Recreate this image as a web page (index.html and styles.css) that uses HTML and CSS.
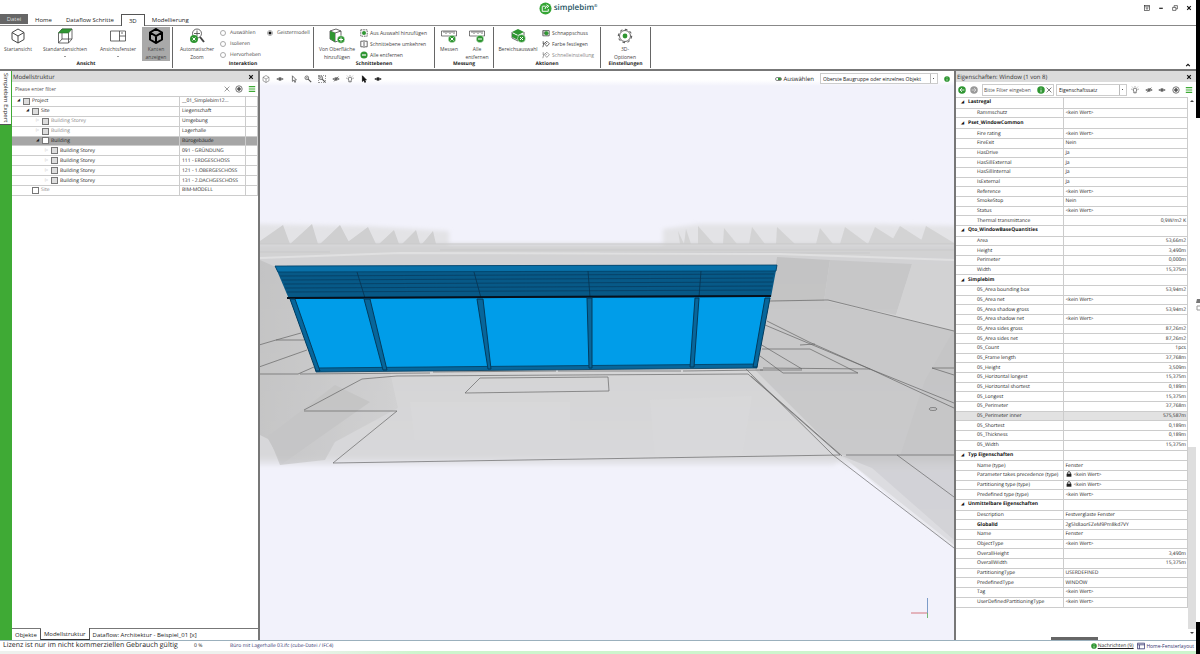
FILE: index.html
```html
<!DOCTYPE html>
<html lang="de">
<head>
<meta charset="utf-8">
<title>simplebim</title>
<link rel="stylesheet" href="styles.css">
</head>
<body>
<svg class="defs" aria-hidden="true">
  <symbol id="cube" viewBox="0 0 16 16"><path d="M8 1 14 4.500V11.500L8 15 2 11.500V4.500ZM2 4.500 8 8 14 4.500M8 8V15"/></symbol>
  <symbol id="eye" viewBox="0 0 10 10"><path d="M1 5Q5 1.500 9 5 5 8.500 1 5Z"/><circle cx="5" cy="5" r="1.200" fill="currentColor"/></symbol>
  <symbol id="eyeoff" viewBox="0 0 10 10"><path d="M1 5Q5 1.500 9 5 5 8.500 1 5ZM2.500 8 8 2"/><circle cx="5" cy="5" r="1" fill="currentColor"/></symbol>
  <symbol id="bulb" viewBox="0 0 10 10"><path d="M3.500 6.500Q2 5 3 3.500 5 1.500 7 3.500 8 5 6.500 6.500V8.500H3.500ZM5 .2V1M.5 4H1.500M8.500 4H9.500M1.500 1 2.200 1.700M8.500 1 7.800 1.700"/></symbol>
  <symbol id="target" viewBox="0 0 10 10"><circle cx="5" cy="5" r="4"/><circle cx="5" cy="5" r="1.800" fill="currentColor"/></symbol>
  <symbol id="menu" viewBox="0 0 10 10"><path d="M1 2H9M1 5H9M1 8H9" stroke="#3faa35" stroke-width="1.500"/></symbol>
  <symbol id="x" viewBox="0 0 10 10"><path d="M1 1 9 9M9 1 1 9"/></symbol>
  <symbol id="xs" viewBox="0 0 10 10"><path d="M2 2 8 8M8 2 2 8"/></symbol>
  <symbol id="arrow" viewBox="0 0 10 10"><path d="M3 1V8L4.700 6.500 6 9.300 7 8.800 5.800 6.200H8Z"/></symbol>
  <symbol id="lens" viewBox="0 0 10 10"><circle cx="3.500" cy="3.500" r="2.300"/><path d="M5.200 5.200 9 9" stroke-width="1.500"/><path d="M2.500 3.500H4.500M3.500 2.500V4.500" stroke-width=".6"/></symbol>
  <symbol id="info" viewBox="0 0 10 10"><circle cx="5" cy="5" r="4.700" fill="#2f9632" stroke="none"/><path d="M5 4.500V8M5 2.200V3.200" stroke="#fff"/></symbol>
  <symbol id="lock" viewBox="0 0 10 10"><rect x="1" y="4.500" width="8" height="5" fill="#222" stroke="none"/><path d="M2.700 5V3.500Q2.700 1 5 1 7.300 1 7.300 3.500V5" stroke="#222" stroke-width="1.300"/></symbol>
  <symbol id="brush" viewBox="0 0 10 10"><path d="M1 9 2.500 3.500M1.500 1.500V5M3 4.500 6 1.500 9.200 4.700 6 8ZM4 3 6 5"/></symbol>
</svg>
<div class="app">
  <header class="titlebar">
    <div class="logo">
      <svg class="logo-mark" viewBox="0 0 14 14"><circle cx="7" cy="7" r="6.500" fill="#35a535" stroke="none"/><path d="M7 4.500H4Q3.500 4.500 3.500 5V10H10V7.500M6.500 7.500Q6.500 5 9 4.500M8 3 10.500 4.500 8.500 6.500" fill="none" stroke="#fff"/></svg>
      <span>simplebim<sup>®</sup></span>
    </div>
    <div class="window-buttons">
      <button aria-label="Menüband"><svg class="i6" viewBox="0 0 10 10"><rect x="1" y="1" width="8" height="8"/><path d="M1 3H9M5 8V4.500M3.500 6 5 4.500 6.500 6"/></svg></button>
      <button aria-label="Minimieren"><svg class="i6" viewBox="0 0 10 10"><path d="M2 5.500H8" stroke-width="2"/></svg></button>
      <button aria-label="Wiederherstellen"><svg class="i6" viewBox="0 0 10 10"><path d="M1 4H6.500V9H1ZM3.500 4V1H9V6.500H6.500"/></svg></button>
      <button aria-label="Schließen"><svg class="i6 bold"><use href="#xs"/></svg></button>
    </div>
  </header>
  <nav class="tabs">
    <button class="file">Datei</button><button>Home</button><button>Dataflow Schritte</button><button class="active">3D</button><button>Modellierung</button>
  </nav>
  <div class="ribbon">
    <section class="group g-view">
      <div class="tools">
        <button class="big w36"><svg><use href="#cube"/></svg><span>Startansicht</span></button>
        <button class="big w58"><svg viewBox="0 0 16 16"><path d="M1.500 5 5 1H15V11L11.500 15H1.500ZM11.500 5V15M5 5V11H15M5 11 1.500 15" stroke-width=".8"/><path d="M1.500 5 5 1H15L11.500 5Z" fill="#2f9632" stroke="#2a6b2c" stroke-width=".6"/></svg><span>Standardansichten</span><i class="caret"></i></button>
        <button class="big w48"><svg viewBox="0 0 16 16"><path d="M.5 3H15.500V13H.5ZM9.500 3V13M9.500 8H15.500M11 5H13" stroke-width=".8"/></svg><span>Ansichtsfenster</span><i class="caret"></i></button>
        <button class="big w28 pressed"><svg><use href="#cube"/></svg><span>Kanten<br>anzeigen</span></button>
      </div>
      <h2>Ansicht</h2>
    </section>
    <section class="group g-inter">
      <div class="tools">
        <button class="big w44"><svg viewBox="0 0 16 16"><circle cx="8" cy="5.500" r="4.500" stroke-width=".8"/><path d="M8 2.500V8.500M5 5.500H11" stroke-width=".8"/><path d="M11 9 15 14" stroke-width="2"/><circle cx="5" cy="11" r="4" fill="#2f9632" stroke="none"/><path d="M3.500 9.500 6.500 12.500M6.500 9.500 3.500 12.500" stroke="#fff"/></svg><span>Automatischer<br>Zoom</span></button>
        <div class="stack radios">
          <label><input type="radio" name="mode">Auswählen</label>
          <label><input type="radio" name="mode">Isolieren</label>
          <label><input type="radio" name="mode">Hervorheben</label>
        </div>
        <div class="stack"><label><input type="radio" name="mode" checked>Geistermodell</label></div>
      </div>
      <h2>Interaktion</h2>
    </section>
    <section class="group g-cut">
      <div class="tools">
        <button class="big w44"><svg viewBox="0 0 16 16"><path d="M1 3 7 1 12 3V12L6 14 1 11ZM1 3 6 5 12 3M6 5V14" stroke-width=".8"/><path d="M1 3 6 5V14L1 11Z" fill="#2f9632" stroke="none"/><circle cx="12" cy="11.500" r="3.800" fill="#2f9632" stroke="#fff" stroke-width=".5"/><path d="M10 11.500H14M12 9.500V13.500" stroke="#fff"/></svg><span>Von Oberfläche<br>hinzufügen</span></button>
        <div class="stack">
          <button><svg class="i8" viewBox="0 0 10 10"><rect x="1" y="1" width="8" height="8" stroke-dasharray="2 1"/><circle cx="5" cy="5" r="2.500" fill="#2f9632" stroke="none"/></svg>Aus Auswahl hinzufügen</button>
          <button><svg class="i8" viewBox="0 0 10 10"><path d="M4 1.500H1V8.500H4M6 1.500H9V8.500H6M5 0V10"/></svg>Schnittebene umkehren</button>
          <button><svg class="i8" viewBox="0 0 10 10"><circle cx="5" cy="5" r="4.500" fill="#2f9632" stroke="none"/><path d="M2.500 5H7.500" stroke="#fff" stroke-width="1.500"/></svg>Alle entfernen</button>
        </div>
      </div>
      <h2>Schnittebenen</h2>
    </section>
    <section class="group g-meas">
      <div class="tools">
        <button class="big w28"><svg viewBox="0 0 16 16"><path d="M.5 8V3H15.500V8ZM3 3V5M5 3V6M7 3V5M9 3V6M11 3V5M13 3V6" stroke-width=".7"/><circle cx="11" cy="11" r="3.800" fill="#2f9632" stroke="#fff" stroke-width=".5"/><path d="M9.500 9.500 12.500 12.500M12.500 9.500 9.500 12.500" stroke="#fff"/></svg><span>Messen</span></button>
        <button class="big w28"><svg viewBox="0 0 16 16"><path d="M.5 8V3H15.500V8ZM3 3V5M5 3V6M7 3V5M9 3V6M11 3V5M13 3V6" stroke-width=".7"/><circle cx="11" cy="11" r="3.800" fill="#2f9632" stroke="#fff" stroke-width=".5"/><path d="M9 11H13" stroke="#fff"/></svg><span>Alle<br>entfernen</span></button>
      </div>
      <h2>Messung</h2>
    </section>
    <section class="group g-act">
      <div class="tools">
        <button class="big w48"><svg viewBox="0 0 16 16"><path d="M2 4 8 1 14 4 8 7Z" fill="#2f9632" stroke="none"/><path d="M2 4V10L8 13V7M14 4V10" stroke-width=".8"/><path d="M2 5 8 8V12L2 9Z" fill="#2f9632" stroke="none"/><circle cx="11.500" cy="10.500" r="4" fill="#2f9632" stroke="#fff" stroke-width=".5"/><path d="M10 9 13 12M13 9 10 12" stroke="#fff"/></svg><span>Bereichsauswahl</span></button>
        <div class="stack">
          <button><svg class="i8" viewBox="0 0 10 10"><path d="M1 2H9V8.500H1Z"/><circle cx="5.500" cy="5.200" r="2.200" fill="#2f9632" stroke="#2f9632"/><path d="M2.500 3V7"/></svg>Schnappschuss</button>
          <button><svg class="i8"><use href="#brush"/></svg>Farbe festlegen</button>
          <button class="dim"><svg class="i8"><use href="#brush"/></svg>Schnelleinstellung</button>
        </div>
      </div>
      <h2>Aktionen</h2>
    </section>
    <section class="group g-opt">
      <div class="tools">
        <button class="big w48"><svg viewBox="0 0 16 16"><circle cx="8" cy="8" r="5.500" stroke-width=".8"/><circle cx="8" cy="8" r="6.700" stroke-dasharray="2.600 2.600"/><circle cx="8" cy="8" r="2.400" fill="#2f9632" stroke="none"/></svg><span>3D-<br>Optionen</span></button>
      </div>
      <h2>Einstellungen</h2>
    </section>
    <button class="collapse" aria-label="Menüband reduzieren"><svg class="i6" viewBox="0 0 10 10"><path d="M2 7 5 4 8 7" stroke="#111" stroke-width="2"/></svg></button>
  </div>

  <main class="workspace">
    <aside class="rail"><button>Simplebim Expert</button></aside>
    <section class="panel model">
      <header class="panel-head"><h3>Modellstruktur</h3><button aria-label="Schließen"><svg class="i6 bold"><use href="#xs"/></svg></button></header>
      <div class="filter">
        <input type="text" aria-label="Filter" placeholder="Please enter filter">
        <button aria-label="Löschen"><svg class="i6"><use href="#x"/></svg></button>
        <button aria-label="Ziel"><svg class="i8"><use href="#target"/></svg></button>
        <button aria-label="Menü"><svg class="i8"><use href="#menu"/></svg></button>
      </div>
      <div class="tree-area">
      <table class="tree">
        <colgroup><col><col class="c-name"><col class="c-end"></colgroup>
        <tbody>
        <tr><td><label class="l0 open"><input type="checkbox">Project</label></td><td>__01_Simplebim12...</td><td></td></tr>
        <tr><td><label class="l1 open"><input type="checkbox">Site</label></td><td>Liegenschaft</td><td></td></tr>
        <tr><td><label class="l2 shut dim"><input type="checkbox">Building Storey</label></td><td>Umgebung</td><td></td></tr>
        <tr><td><label class="l2 shut dim"><input type="checkbox">Building</label></td><td>Lagerhalle</td><td></td></tr>
        <tr class="sel"><td><label class="l2 open"><input type="checkbox">Building</label></td><td>Bürogebäude</td><td></td></tr>
        <tr><td><label class="l3 shut"><input type="checkbox">Building Storey</label></td><td>091 - GRÜNDUNG</td><td></td></tr>
        <tr><td><label class="l3 shut"><input type="checkbox">Building Storey</label></td><td>111 - ERDGESCHOSS</td><td></td></tr>
        <tr><td><label class="l3 shut"><input type="checkbox">Building Storey</label></td><td>121 - 1.OBERGESCHOSS</td><td></td></tr>
        <tr><td><label class="l3 shut"><input type="checkbox">Building Storey</label></td><td>131 - 2.DACHGESCHOSS</td><td></td></tr>
        <tr><td><label class="l1 dim blank"><input type="checkbox">Site</label></td><td>BIM-MODELL</td><td></td></tr>
        </tbody>
      </table>
      </div>
      <nav class="bottom-tabs"><button>Objekte</button><button class="active">Modellstruktur</button><button>Dataflow: Architektur - Beispiel_01 [x]</button></nav>
    </section>

    <section class="view">
      <div class="view-bar">
        <button aria-label="Start"><svg class="i8"><use href="#cube"/></svg></button>
        <button aria-label="Zeigen"><svg class="i8"><use href="#eye"/></svg></button>
        <button aria-label="Auswahl"><svg class="i8"><use href="#arrow"/></svg></button>
        <button aria-label="Zoom"><svg class="i8"><use href="#lens"/></svg></button>
        <button aria-label="Zoomfenster" class="framed"><svg class="i8"><use href="#lens"/></svg></button>
        <button aria-label="Ausblenden"><svg class="i8"><use href="#eyeoff"/></svg></button>
        <button aria-label="Licht"><svg class="i8"><use href="#bulb"/></svg></button>
        <button aria-label="Zeiger"><svg class="i8 solid"><use href="#arrow"/></svg></button>
        <button aria-label="Ansicht"><svg class="i8 dark"><use href="#eye"/></svg></button>
        <label class="toggle"><input type="checkbox" checked>Auswählen</label>
        <select aria-label="Auswahlebene"><option>Oberste Baugruppe oder einzelnes Objekt</option></select>
        <button aria-label="Info"><svg class="i6"><use href="#info"/></svg></button>
      </div>
      <svg class="scene" viewBox="260 86 694 554" preserveAspectRatio="none">
        <defs>
          <linearGradient id="ground" x1="0" y1="242" x2="0" y2="470" gradientUnits="userSpaceOnUse"><stop offset="0" stop-color="#d2d2d3"/><stop offset=".45" stop-color="#d4d4d5"/><stop offset=".94" stop-color="#d8d8da"/><stop offset="1" stop-color="#f2f2fb"/></linearGradient>
          <linearGradient id="side" x1="0" y1="0" x2="1" y2="0"><stop offset="0" stop-color="#b8b8b8"/><stop offset="1" stop-color="#cdcdce"/></linearGradient>
          <filter id="soft"><feGaussianBlur stdDeviation="2"/></filter>
          <filter id="soft2"><feGaussianBlur stdDeviation=".6"/></filter>
        </defs>
        <g filter="url(#soft)">
          <path d="M250 224 367 226 449 231V246H250Z" fill="#e3e3e6"/>
          <path d="M663 229 700 224 880 224 960 226V248H663Z" fill="#e3e3e6"/>
          <path d="M250 244 960 244V555L840 462 833 466H250Z" fill="url(#ground)"/>
        </g>
        <g fill="#cfcfd0" filter="url(#soft2)">
          <path d="M260 241 283 225 290 244H260ZM290 244 312 224 318 244ZM320 244 340 225 350 244ZM345 244 368 227 376 244ZM379 244 394 230 399 244ZM402 244 416 230 420 244ZM422 244 433 231 436 244Z"/>
          <path d="M678 231 684 244H680ZM686 229 691 244H684ZM698 226 714 244H698ZM724 228 737 244H723ZM752 227 765 244H749ZM777 227 795 244H776ZM820 228 833 244H816ZM845 227 868 244H840ZM875 227 902 244H868ZM900 226 928 244H890ZM926 226 954 243V244H920Z" opacity=".8"/>
        </g>
        <path d="M260 244H954M440 250H954M260 252H330M600 253H870" stroke="#c9c9ca"/>
        <path d="M260 258 400 253 780 254 954 260" fill="none" stroke="#e0e0e1" stroke-width="2"/>
        <g opacity=".55">
          <path d="M260 260 278 268 316 372 390 372 398 408 335 442 325 460 280 465 270 440 260 435Z" fill="url(#side)"/>
          <path d="M777 257 830 260 824 302 770 302Z" fill="#b8b8b8"/>
          <path d="M830 260 912 264 896 315 824 300Z" fill="#bfbfc0"/>
          <path d="M912 264H954V330L896 315Z" fill="#d2d2d3"/>
          <path d="M770 302 827 301 954 331V470L840 455 755 370Z" fill="#bfbfc0"/>
          <path d="M954 330V545L842 456H900L925 380Z" fill="#b9b9ba"/>
          <path d="M267 437 335 385 370 402 282 464Z" fill="#b8b8b8"/>
          <path d="M410 402H570V440H415ZM650 400 752 396 742 455H655Z" fill="#dadadc"/>
        </g>
        <path d="M842 456 872 468 954 540V548L905 510Z" fill="#e3e3e6" opacity=".6"/>
        <g class="edges">
          <path d="M259 345 276 340 301 333M276 340H304M259 367 307 350M259 374 298 374 314 367M300 374 430 373M433 372 556 371M558 371 681 371M683 371 763 370"/>
          <path d="M304 410 362 379 397 376 748 374 840 455 333 463 397 411H304M480 378 608 377 609 391 465 393Z"/>
          <path d="M746 369 833 455 954 548M751 376 842 456M846 455H954M897 455 954 497"/>
          <path d="M770 301 828 300 954 331M767 321 809 342 870 369 954 403M765 325 870 369 954 408M760 344 802 369M762 349H810L858 373 783 373 760 356M763 368 870 369M800 345 815 344M760 370 802 370M932 368H954M932 368 954 375"/>
          <ellipse cx="933" cy="409" rx="4" ry="1.500"/>
        </g>
        <path d="M289 297 771 295 756 367 317 371Z" fill="#009de9"/>
        <path d="M275 266 777 265 771 297 289 299Z" fill="#075987"/>
        <path d="M275 266 777 265 776 271 278 272Z" fill="#0870a8" stroke="#034066" stroke-width=".8"/>
        <path d="M280 276 774 274M282 280 773 278M284 284 773 282M285 288 772 286M287 292 771 290" stroke="#07395c" stroke-width=".7" fill="none"/>
        <path d="M357 272 365 298M474 272 481 298M588 271 590 297M701 271 699 297" stroke="#08324f" stroke-width=".8" fill="none"/>
        <path d="M287 298 771 296" stroke="#06111d" stroke-width="2"/>
        <path d="M315 368 757 364V368L316 372Z" fill="#07669b" stroke="#033b5d" stroke-width=".8"/>
        <g fill="#07669b" stroke="#033b5d"><path d="M290 299H295L320 371H316ZM364 299H370L387 370H383ZM477 299H483L491 369H488ZM587 298H592V368H589ZM695 298H699L694 367H690ZM765 298H770L757 367H753Z"/></g>
        <path d="M911 613H927" stroke="#d4767e"/><path d="M927.500 598V613" stroke="#7d9cc8"/><path d="M927.500 613V618" stroke="#74b974"/>
      </svg>
    </section>

    <section class="panel props">
      <header class="panel-head"><h3>Eigenschaften: Window (1 von 8)</h3><button aria-label="Schließen"><svg class="i6 bold"><use href="#xs"/></svg></button></header>
      <div class="prop-bar">
        <button aria-label="Zurück"><svg class="i8" viewBox="0 0 10 10"><circle cx="5" cy="5" r="4.700" fill="#2f9632" stroke="none"/><path d="M8 5H2.500M5 2.500 2.500 5 5 7.500" stroke="#fff"/></svg></button>
        <button aria-label="Vor"><svg class="i8" viewBox="0 0 10 10"><circle cx="5" cy="5" r="4.700" fill="#999" stroke="none"/><path d="M2 5H7.500M5 2.500 7.500 5 5 7.500" stroke="#ddd"/></svg></button>
        <div class="search"><input type="text" aria-label="Filter" placeholder="Bitte Filter eingeben"><svg class="i8"><use href="#info"/></svg><button aria-label="Löschen"><svg class="i6"><use href="#x"/></svg></button></div>
        <select aria-label="Gruppierung"><option>Eigenschaftssatz</option></select>
        <div class="prop-icons">
          <button aria-label="Licht"><svg class="i8"><use href="#bulb"/></svg></button>
          <button aria-label="Ausblenden"><svg class="i8"><use href="#eyeoff"/></svg></button>
          <button aria-label="Zeigen"><svg class="i8"><use href="#eye"/></svg></button>
          <button aria-label="Ziel"><svg class="i8"><use href="#target"/></svg></button>
          <button aria-label="Menü"><svg class="i8"><use href="#menu"/></svg></button>
        </div>
      </div>
      <div class="prop-body">
        <div class="prop-scroll">
        <table class="plist">
          <colgroup><col class="c-key"><col></colgroup>
          <tbody>
          <tr class="cat"><th>Lastregal</th><td></td></tr>
          <tr><th>Rammschutz</th><td>&lt;kein Wert&gt;</td></tr>
          <tr class="cat"><th>Pset_WindowCommon</th><td></td></tr>
          <tr><th>Fire rating</th><td>&lt;kein Wert&gt;</td></tr>
          <tr><th>FireExit</th><td>Nein</td></tr>
          <tr><th>HasDrive</th><td>Ja</td></tr>
          <tr><th>HasSillExternal</th><td>Ja</td></tr>
          <tr><th>HasSillInternal</th><td>Ja</td></tr>
          <tr><th>IsExternal</th><td>Ja</td></tr>
          <tr><th>Reference</th><td>&lt;kein Wert&gt;</td></tr>
          <tr><th>SmokeStop</th><td>Nein</td></tr>
          <tr><th>Status</th><td>&lt;kein Wert&gt;</td></tr>
          <tr><th>Thermal transmittance</th><td class="n">0,9W/m2 K</td></tr>
          <tr class="cat"><th>Qto_WindowBaseQuantities</th><td></td></tr>
          <tr><th>Area</th><td class="n">53,66m2</td></tr>
          <tr><th>Height</th><td class="n">3,490m</td></tr>
          <tr><th>Perimeter</th><td class="n">0,000m</td></tr>
          <tr><th>Width</th><td class="n">15,375m</td></tr>
          <tr class="cat"><th>Simplebim</th><td></td></tr>
          <tr><th>05_Area bounding box</th><td class="n">53,94m2</td></tr>
          <tr><th>05_Area net</th><td>&lt;kein Wert&gt;</td></tr>
          <tr><th>05_Area shadow gross</th><td class="n">53,94m2</td></tr>
          <tr><th>05_Area shadow net</th><td>&lt;kein Wert&gt;</td></tr>
          <tr><th>05_Area sides gross</th><td class="n">87,26m2</td></tr>
          <tr><th>05_Area sides net</th><td class="n">87,26m2</td></tr>
          <tr><th>05_Count</th><td class="n">1pcs</td></tr>
          <tr><th>05_Frame length</th><td class="n">37,768m</td></tr>
          <tr><th>05_Height</th><td class="n">3,509m</td></tr>
          <tr><th>05_Horizontal longest</th><td class="n">15,375m</td></tr>
          <tr><th>05_Horizontal shortest</th><td class="n">0,189m</td></tr>
          <tr><th>05_Longest</th><td class="n">15,375m</td></tr>
          <tr><th>05_Perimeter</th><td class="n">37,768m</td></tr>
          <tr class="sel"><th>05_Perimeter inner</th><td class="n">575,587m</td></tr>
          <tr><th>05_Shortest</th><td class="n">0,189m</td></tr>
          <tr><th>05_Thickness</th><td class="n">0,189m</td></tr>
          <tr><th>05_Width</th><td class="n">15,375m</td></tr>
          <tr class="cat"><th>Typ Eigenschaften</th><td></td></tr>
          <tr><th>Name (type)</th><td>Fenster</td></tr>
          <tr><th>Parameter takes precedence (type)</th><td><svg class="lock"><use href="#lock"/></svg>&lt;kein Wert&gt;</td></tr>
          <tr><th>Partitioning type (type)</th><td><svg class="lock"><use href="#lock"/></svg>&lt;kein Wert&gt;</td></tr>
          <tr><th>Predefined type (type)</th><td>&lt;kein Wert&gt;</td></tr>
          <tr class="cat"><th>Unmittelbare Eigenschaften</th><td></td></tr>
          <tr><th>Description</th><td>Festverglaste Fenster</td></tr>
          <tr><th class="strong">GlobalId</th><td>2g5ls8aorEZeM9Pm8kd7VY</td></tr>
          <tr><th>Name</th><td>Fenster</td></tr>
          <tr><th>ObjectType</th><td>&lt;kein Wert&gt;</td></tr>
          <tr><th>OverallHeight</th><td class="n">3,490m</td></tr>
          <tr><th>OverallWidth</th><td class="n">15,375m</td></tr>
          <tr><th>PartitioningType</th><td>USERDEFINED</td></tr>
          <tr><th>PredefinedType</th><td>WINDOW</td></tr>
          <tr><th>Tag</th><td>&lt;kein Wert&gt;</td></tr>
          <tr><th>UserDefinedPartitioningType</th><td>&lt;kein Wert&gt;</td></tr>
          </tbody>
        </table>
        </div>
        <div class="scrollbar"><i class="up"></i><div class="thumb"></div><i class="down"></i></div>
      </div>
      <div class="handle"></div>
    </section>
  </main>
  <footer class="status">
    <span class="license">Lizenz ist nur im nicht kommerziellen Gebrauch gültig</span>
    <span class="percent">0 %</span>
    <span class="file-name">Büro mit Lagerhalle 03.ifc (cube-Datei / IFC4)</span>
    <a href="#messages"><svg class="i6"><use href="#info"/></svg><u>Nachrichten (9)</u></a>
    <button><svg class="i8" viewBox="0 0 10 10"><path d="M.5 1.500H9.500V8.500H.5ZM.5 3.500H9.500M3 3.500V8.500"/></svg>Home-Fensterlayout</button>
  </footer>
  <div class="glow"></div>
</div>
<div class="edge"><div class="edge-top"></div><svg class="edge-mark" viewBox="0 0 4 14"><path d="M1 1H4V5H0Z" fill="#777" stroke="none"/><path d="M1 8H4M1 8V12H4" stroke="#999" fill="none"/></svg><div class="edge-bottom"></div></div>
</body>
</html>
```
FILE: styles.css
```css
* { box-sizing: border-box; }
body {
  margin: 0;
  height: 100vh;
  display: flex;
  overflow: hidden;
  background: #fff;
  color: #222;
  font: 5px/8px "Open Sans", "Noto Sans", sans-serif;
  text-rendering: geometricPrecision;
}
button, input, select { font: inherit; color: inherit; margin: 0; }
button { border: 0; padding: 0; background: none; white-space: nowrap; }
h2, h3 { margin: 0; font-size: inherit; }
svg { display: block; fill: none; stroke: currentColor; flex: none; }
.defs { position: absolute; width: 0; height: 0; }
.i6 { width: 6px; height: 6px; }
.i8 { width: 8px; height: 8px; }
.bold { stroke-width: 2; color: #111; }
.solid { fill: #111; color: #111; }
.dark { color: #111; }
.dim { color: #888; }

.app { flex: 1; min-width: 0; display: flex; flex-direction: column; }
.edge { width: 4px; display: flex; flex-direction: column; justify-content: space-between; }
.edge-top { height: 118px; background: #000; }
.edge-bottom { height: 32px; background: #000; }
.edge-mark { width: 4px; height: 14px; margin-bottom: 130px; }

.titlebar { height: 15px; display: grid; grid-template-columns: 1fr auto 1fr; align-items: center; padding: 1px 4px 0 0; }
.logo { grid-column: 2; display: flex; align-items: center; gap: 2px; padding-right: 56px; color: #1c5260; font-size: 8px; line-height: 14px; font-weight: 600; }
.logo sup { font-size: 4px; line-height: 0; vertical-align: 3px; }
.logo-mark { width: 13px; height: 13px; }
.window-buttons { display: flex; gap: 8px; justify-content: flex-end; }

.tabs { height: 11px; display: flex; align-items: flex-end; border-bottom: 1px solid #888; font-size: 6px; }
.tabs button { height: 11px; padding: 0 7px; }
.tabs .file { width: 28px; height: 10px; padding: 0; margin-bottom: 1px; background: #666; color: #ddd; }
.tabs .active { height: 12px; margin-bottom: -1px; border: 1px solid #555; border-bottom: 0; background: #fff; }

.ribbon { height: 45px; display: flex; padding: 1px 0 1px; border-bottom: 2px solid #777; color: #444; }
.group { display: flex; flex-direction: column; border-right: 1px solid #666; }
.group h2 { text-align: center; color: #222; line-height: 7px; font-weight: 700; }
.tools { flex: 1; display: flex; min-height: 0; }
.g-view { width: 173px; }
.g-inter { width: 141px; }
.g-inter .tools { padding-left: 1px; }
.g-cut { width: 121px; }
.g-meas { width: 59px; }
.g-act { width: 107px; }
.g-opt { width: 50px; }
.big { display: flex; flex: none; flex-direction: column; align-items: center; height: 34px; line-height: 8px; padding-top: 1px; }
.big svg { width: 16px; height: 16px; margin-bottom: 1px; }
.w28 { width: 28px; } .w36 { width: 36px; } .w44 { width: 46px; } .w48 { width: 48px; } .w58 { width: 58px; }
.pressed { background: #a9a9a9; }
.pressed svg { color: #000; stroke-width: 2; }
.caret { margin-top: 3px; border: 1px solid transparent; border-top-color: #333; }
.stack { display: flex; flex: none; flex-direction: column; gap: 3px; padding-top: 2px; }
.stack button, .stack label { display: flex; align-items: center; gap: 2px; height: 8px; white-space: nowrap; }
.radios { margin-right: 6px; }
.stack label { gap: 4px; }
.stack input { appearance: none; width: 6px; height: 6px; border: 1px solid #aaa; border-radius: 50%; }
.stack input:checked { background: radial-gradient(#111 50%, #fff 60%); }
.collapse { margin-left: auto; align-self: flex-end; padding-right: 5px; }

.workspace { flex: 1; min-height: 0; display: flex; }
.rail { width: 12px; background: #3faa35; }
.rail button { width: 11px; height: 54px; writing-mode: vertical-rl; background: #fff; border-bottom: 1px solid #555; font-size: 6px; line-height: 11px; }
.panel { display: flex; flex-direction: column; min-width: 0; }
.panel-head { height: 11px; display: flex; align-items: center; justify-content: space-between; padding: 0 4px 0 1px; background: #dcdcdc; color: #333; }
.panel-head h3 { font-size: 6px; font-weight: 400; }
.model { width: 248px; border-right: 2px solid #777; }
.filter { height: 15px; display: flex; align-items: center; gap: 5px; padding-right: 2px; border-bottom: 1px solid #ccc; color: #555; }
.filter input { flex: 1; min-width: 0; border: 0; padding: 0 3px; outline: 0; }
input::placeholder { color: #555; opacity: 1; }
.tree-area { flex: 1; }
table { border-collapse: collapse; table-layout: fixed; width: 100%; }
td, th { padding: 0 2px; border: 1px solid #ccc; border-left: 0; line-height: 8px; white-space: nowrap; text-align: left; font-weight: 400; overflow: hidden; }
.tree { height: 99px; }
.tree td { border-top: 0; }
.c-name { width: 66px; }
.c-end { width: 12px; }
.tree label { display: flex; align-items: center; gap: 2px; }
.tree label::before { content: "◢"; width: 5px; font-size: 4px; text-align: center; }
.tree .shut::before { content: "▷"; color: #999; }
.tree .blank::before { content: ""; }
.tree input { appearance: none; width: 7px; height: 7px; border: 1px solid #777; background: #ddd; }
.tree .blank input, .tree .sel input { background: #fff; }
.l0 { padding-left: 2px; } .l1 { padding-left: 11px; } .l2 { padding-left: 21px; } .l3 { padding-left: 30px; }
.tree .sel { background: #a6a6a6; }
.bottom-tabs { height: 12px; display: flex; border-top: 1px solid #777; }
.bottom-tabs button { padding: 0 3px; font-size: 6px; border-right: 1px solid #555; }
.bottom-tabs button:last-child { border: 0; }
.bottom-tabs .active { background: #fff; border-bottom: 1px solid #333; margin-top: -1px; }

.view { flex: 1; min-width: 0; display: flex; flex-direction: column; background: #f2f2fb; }
.view-bar { height: 15px; display: flex; align-items: center; gap: 6px; padding: 0 4px 0 2px; background: linear-gradient(#fff 60%, #f2f2fb); }
.view-bar button { color: #555; }
.framed { outline: 1px dotted #999; outline-offset: -1px; }
.toggle { margin-left: auto; display: flex; align-items: center; gap: 1px; font-size: 6px; }
.toggle input { appearance: none; width: 7px; height: 4px; border: 1px solid #888; border-radius: 2px; background: linear-gradient(90deg, #fff 40%, #2f9632 40%); }
select { appearance: none; height: 11px; padding: 0 2px; border: 1px solid #ccc; border-radius: 0; background: linear-gradient(#555, #555) right 3px center / 1px 1px no-repeat, linear-gradient(#bbb, #bbb) right 6px center / 1px 100% no-repeat, #fff; }
.view-bar select { width: 118px; }
.scene { flex: 1; min-height: 0; width: 100%; stroke: none; }
.edges { fill: none; stroke: #555; stroke-width: .7; opacity: .85; }

.props { width: 242px; border-left: 2px solid #777; }
.prop-bar { height: 15px; display: flex; align-items: center; gap: 4px; padding: 0 3px 0 2px; }
.search { width: 72px; height: 12px; display: flex; align-items: center; gap: 1px; padding-right: 1px; border: 1px solid #ccc; }
.search input { flex: 1; min-width: 0; border: 0; padding: 0 1px; outline: 0; }
.prop-bar select { width: 71px; height: 12px; margin-left: -2px; }
.prop-icons { flex: 1; display: flex; justify-content: space-between; color: #555; }
.prop-body { flex: 1; min-height: 0; display: flex; }
.prop-scroll { flex: 1; min-width: 0; }
.plist { height: 511px; }
.c-key { width: 107px; }
.plist th { padding-left: 21px; }
.plist .cat th, .plist .strong { font-weight: 700; color: #111; }
.plist .cat th { padding-left: 5px; }
.plist .cat th::before { content: "◢"; display: inline-block; width: 7px; font-size: 4px; }
.plist .n { text-align: right; padding-right: 1px; }
.plist .sel { background: #e2e2e2; }
.lock { display: inline-block; width: 6px; height: 6px; margin-right: 2px; vertical-align: -1px; }
.scrollbar { width: 8px; display: flex; flex-direction: column; align-items: center; justify-content: flex-end; padding: 3px 0; }
.up, .down { border: 2px solid transparent; }
.up { border-bottom-color: #444; border-top: 0; margin-bottom: auto; }
.down { border-top-color: #444; border-bottom: 0; }
.thumb { width: 100%; height: 182px; margin-bottom: 3px; background: #dedede; }
.handle { width: 47px; height: 3px; margin-left: 95px; background: #666; }

.status { height: 11px; display: flex; align-items: center; padding: 0 2px 0 3px; border-top: 1px solid #9bb0bd; color: #222; }
.license { width: 191px; font-size: 7px; }
.percent { width: 36px; }
.file-name { margin-right: auto; color: #35356f; }
.status a, .status button { display: flex; align-items: center; gap: 1px; color: #222; }
.status button { margin-left: 4px; color: #35356f; }
.glow { height: 3px; background: linear-gradient(90deg, #eef1ee 25%, #cdf5cd 35%); }
```
